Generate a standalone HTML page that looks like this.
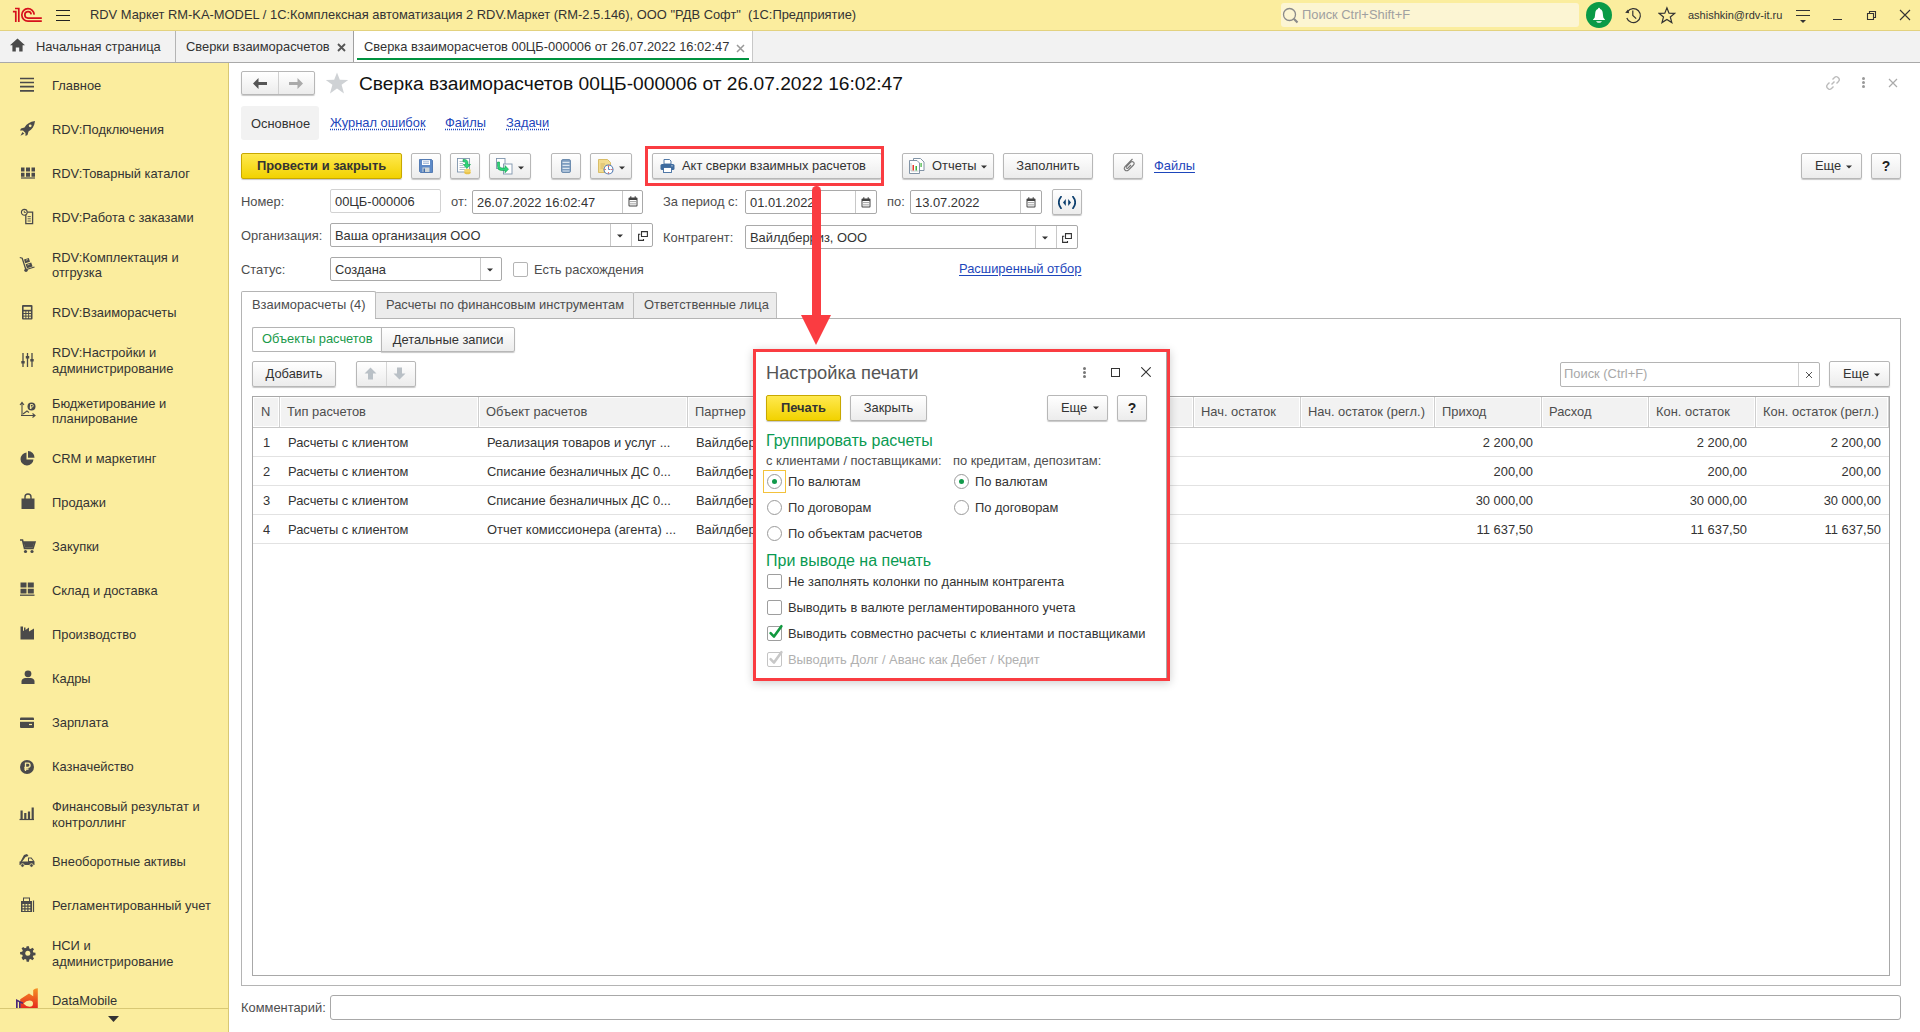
<!DOCTYPE html>
<html><head><meta charset="utf-8">
<style>
*{box-sizing:border-box;margin:0;padding:0}
html,body{width:1920px;height:1032px;overflow:hidden;background:#fff;font-family:"Liberation Sans",sans-serif;font-size:12.9px;color:#4d4d4d}
.a{position:absolute}
.t{position:absolute;white-space:nowrap;line-height:16px}
#top{left:0;top:0;width:1920px;height:31px;background:#fbed9e;border-bottom:1px solid #e3d27f}
#tabs{left:0;top:31px;width:1920px;height:32px;background:#f2f2f2;border-bottom:1px solid #a9a9a9}
#side{left:0;top:63px;width:229px;height:969px;background:#fbed9e;border-right:1px solid #d8c874}
.btn{position:absolute;height:26px;border:1px solid #b7b7b7;border-radius:2px;background:linear-gradient(#fff,#ececec);box-shadow:0 1px 1px rgba(0,0,0,.22);color:#333;white-space:nowrap;line-height:24px;text-align:center}
.ybtn{background:linear-gradient(#ffe94f,#f2d200);border-color:#c8a800;color:#333;font-weight:bold}
.fld{position:absolute;height:24px;border:1px solid #a9a9a9;border-radius:2px;background:#fff;color:#333;line-height:23px;padding-left:4px;white-space:nowrap}
.lnk{color:#1d46bb;text-decoration:underline;text-decoration-style:dotted;text-underline-offset:2px}
.lk2{color:#1d46bb;text-decoration:underline;text-underline-offset:2px}
</style></head><body>
<div id="top" class="a">
<svg class="a" style="left:0;top:0" width="48" height="30" viewBox="0 0 48 30"><g fill="none" stroke="#d6101c" stroke-width="1.7"><path d="M12.9 11.7 H15.8 V21.9"/><path d="M15 8.5 H18.8 V21.9"/><path d="M34.2 14.6 A6.2 6.2 0 1 0 28 21.1 H41.8"/><path d="M31.2 14.4 A3.2 3.2 0 1 0 28 18.1 H41.8"/></g></svg>
<div class="a" style="left:56px;top:10px;width:14px;height:1px;background:#222"></div>
<div class="a" style="left:56px;top:15px;width:14px;height:1px;background:#222"></div>
<div class="a" style="left:56px;top:20px;width:14px;height:1px;background:#222"></div>
<div class="t" style="left:90px;top:7px;color:#333">RDV Маркет RM-KA-MODEL / 1С:Комплексная автоматизация 2 RDV.Маркет (RM-2.5.146), ООО "РДВ Софт"&nbsp; (1С:Предприятие)</div>
<div class="a" style="left:1281px;top:3px;width:298px;height:24px;background:#fcf5d3;border-radius:3px"></div>
<svg class="a" style="left:1282px;top:7px" width="18" height="17" viewBox="0 0 18 17"><circle cx="7.5" cy="7.5" r="6" fill="none" stroke="#8a8a8a" stroke-width="1.3"/><path d="M11.8 11.8 L15.5 15.5" stroke="#8a8a8a" stroke-width="2.2"/></svg>
<div class="t" style="left:1302px;top:7px;color:#a0a0a0">Поиск Ctrl+Shift+F</div>
<div class="a" style="left:1586px;top:2px;width:26px;height:26px;border-radius:50%;background:#0a9a47"></div>
<svg class="a" style="left:1591px;top:7px" width="16" height="17" viewBox="0 0 16 17"><path d="M8 0.8 Q9 0.8 9 2 Q11.6 2.8 11.8 6.5 L12.3 10.5 L14.2 13 H1.8 L3.7 10.5 L4.2 6.5 Q4.4 2.8 7 2 Q7 0.8 8 0.8Z" fill="#fff"/><path d="M5 14.2 H11 Q10 15.8 8 15.8 Q6 15.8 5 14.2Z" fill="#fff"/></svg>
<svg class="a" style="left:1624px;top:6px" width="18" height="18" viewBox="0 0 18 18"><path d="M3.6 5.6 A7 7 0 1 1 2.8 12" fill="none" stroke="#333" stroke-width="1.2"/><path d="M1.2 6.8 L5.2 7.2 L4 3.6Z" fill="#333"/><path d="M8.8 4.6 V9.4 L12.2 12.6" fill="none" stroke="#333" stroke-width="1.2"/></svg>
<svg class="a" style="left:1658px;top:6px" width="18" height="18" viewBox="0 0 18 18"><path d="M8.9 1.8 L11 7.1 L16.6 7.4 L12.3 11 L13.8 16.6 L8.9 13.4 L4 16.6 L5.5 11 L1.2 7.4 L6.8 7.1Z" fill="none" stroke="#333" stroke-width="1.2" stroke-linejoin="miter"/></svg>
<div class="t" style="left:1688px;top:7px;color:#333;font-size:11px">ashishkin@rdv-it.ru</div>
<div class="a" style="left:1796px;top:10px;width:14px;height:1px;background:#333"></div>
<div class="a" style="left:1796px;top:15px;width:14px;height:1px;background:#333"></div>
<svg class="a" style="left:1800px;top:20px" width="6" height="3"><path d="M0 0 H6 L3 3Z" fill="#333"/></svg>
<div class="a" style="left:1833px;top:19px;width:9px;height:1px;background:#333"></div>
<svg class="a" style="left:1866px;top:10px" width="11" height="11" viewBox="0 0 11 11"><path d="M1.5 3.5 H7.5 V9.5 H1.5Z M3.5 3.5 V1.5 H9.5 V7.5 H7.5" fill="none" stroke="#333" stroke-width="1.1"/></svg>
<svg class="a" style="left:1899px;top:9px" width="12" height="12" viewBox="0 0 12 12"><path d="M1 1 L11 11 M11 1 L1 11" stroke="#333" stroke-width="1.1"/></svg>
</div>
<div id="tabs" class="a">
<svg class="a" style="left:9px;top:38px;top:7px" width="17" height="14" viewBox="0 0 17 14"><path d="M8.5 0.5 L16 7.2 H13.6 V13.5 H10.2 V9.5 H6.8 V13.5 H3.4 V7.2 H1Z" fill="#4a4a4a"/></svg>
<div class="t" style="left:36px;top:8px;color:#333">Начальная страница</div>
<div class="a" style="left:175px;top:0;width:1px;height:31px;background:#b4b4b4"></div>
<div class="t" style="left:186px;top:8px;color:#333">Сверки взаиморасчетов</div>
<svg class="a" style="left:337px;top:12px" width="9" height="9" viewBox="0 0 9 9"><path d="M1 1 L8 8 M8 1 L1 8" stroke="#555" stroke-width="1.8"/></svg>
<div class="a" style="left:353px;top:0;width:1px;height:31px;background:#a0a0a0"></div>
<div class="a" style="left:354px;top:0;width:398px;height:31px;background:#fff"></div>
<div class="a" style="left:357px;top:27px;width:392px;height:2px;background:#00923f"></div>
<div class="t" style="left:364px;top:8px;color:#333">Сверка взаиморасчетов 00ЦБ-000006 от 26.07.2022 16:02:47</div>
<svg class="a" style="left:736px;top:13px" width="9" height="9" viewBox="0 0 9 9"><path d="M1 1 L8 8 M8 1 L1 8" stroke="#999" stroke-width="1.5"/></svg>
<div class="a" style="left:752px;top:0;width:1px;height:31px;background:#c8c8c8"></div>
</div>
<div id="side" class="a">
<svg class="a" style="left:20px;top:15px;overflow:visible" width="16" height="16"><path d="M0 0.5H14M0 4.5H14M0 8.7H14M0 12.9H14" stroke="#4a4a4a" stroke-width="1.7"/></svg>
<div class="t" style="left:52px;top:15.0px;color:#333">Главное</div>
<svg class="a" style="left:19.5px;top:58px;overflow:visible" width="16" height="16"><path d="M15 0 C10 0.5 6.5 3 4.5 6.5 L1 7.5 L0 9.5 L3 9.5 L5.5 12 L5.5 15 L7.5 14 L8.5 10.5 C12 8.5 14.5 5 15 0Z" fill="#4a4a4a"/><circle cx="10.2" cy="4.8" r="1.4" fill="#fbed9e"/><path d="M2.5 11 L0.5 14.8 L4.3 12.8Z" fill="#4a4a4a"/></svg>
<div class="t" style="left:52px;top:59.0px;color:#333">RDV:Подключения</div>
<svg class="a" style="left:20.5px;top:104px;overflow:visible" width="16" height="16"><path d="M0 0.5h3.5v4h-3.5zM5 0.5h4v4h-4zM10.5 0.5h3.5v4h-3.5zM0 5.8h3.5v4h-3.5zM5 5.8h4v4h-4zM10.5 5.8h3.5v4h-3.5z" fill="#4a4a4a"/><path d="M0 11H14" stroke="#4a4a4a" stroke-width="1.2"/></svg>
<div class="t" style="left:52px;top:102.7px;color:#333">RDV:Товарный каталог</div>
<svg class="a" style="left:20.5px;top:145.5px;overflow:visible" width="16" height="16" viewBox="0 0 16 16"><path d="M4.8 3.2 H11.6 V14.6 H4.8Z" fill="none" stroke="#4a4a4a" stroke-width="1.3"/><path d="M6.6 7.6H9.8M6.6 9.8H9.8M6.6 12H9.8" stroke="#4a4a4a" stroke-width="0.9"/><circle cx="3.3" cy="3.3" r="2.9" fill="#fbed9e" stroke="#4a4a4a" stroke-width="1.1"/><path d="M3.3 1.8V3.5H4.8" stroke="#4a4a4a" stroke-width="0.9" fill="none"/></svg>
<div class="t" style="left:52px;top:146.7px;color:#333">RDV:Работа с заказами</div>
<svg class="a" style="left:19px;top:192px;overflow:visible" width="16" height="18" viewBox="0 0 16 18"><path d="M0.8 2.5 L3.2 3.2 L7 15" stroke="#4a4a4a" stroke-width="1.3" fill="none"/><circle cx="7" cy="15.3" r="1.7" fill="#4a4a4a"/><path d="M7.5 14.5 L15.5 12" stroke="#4a4a4a" stroke-width="1.3"/><path d="M5 4.5 L9.8 3 L11 6.8 L6.2 8.3Z M6.6 9.2 L12.2 7.4 L13.6 11.4 L8 13.2Z" fill="#4a4a4a"/><path d="M7 5.2 L8.8 4.6M8.4 10 L10.6 9.3" stroke="#fbed9e" stroke-width="0.7"/></svg>
<div class="t" style="left:52px;top:186.7px;color:#333">RDV:Комплектация и</div>
<div class="t" style="left:52px;top:202.1px;color:#333">отгрузка</div>
<svg class="a" style="left:21.5px;top:242px;overflow:visible" width="11" height="15" viewBox="0 0 11 15"><rect x="0" y="0" width="10.5" height="14.5" rx="1" fill="#4a4a4a"/><rect x="1.6" y="1.8" width="7.3" height="3" fill="#fbed9e"/><g fill="#fbed9e"><rect x="1.6" y="6.4" width="1.8" height="1.6"/><rect x="4.35" y="6.4" width="1.8" height="1.6"/><rect x="7.1" y="6.4" width="1.8" height="1.6"/><rect x="1.6" y="9" width="1.8" height="1.6"/><rect x="4.35" y="9" width="1.8" height="1.6"/><rect x="7.1" y="9" width="1.8" height="1.6"/><rect x="1.6" y="11.6" width="1.8" height="1.6"/><rect x="4.35" y="11.6" width="1.8" height="1.6"/><rect x="7.1" y="11.6" width="1.8" height="1.6"/></g></svg>
<div class="t" style="left:52px;top:241.7px;color:#333">RDV:Взаиморасчеты</div>
<svg class="a" style="left:20.5px;top:290px;overflow:visible" width="16" height="16"><path d="M2 0V14M6.5 0V14M11 0V14" stroke="#4a4a4a" stroke-width="1.3"/><path d="M0.3 8h3.4v2.5H0.3zM4.8 3h3.4v2.5H4.8zM9.3 6h3.4v2.5H9.3z" fill="#4a4a4a"/></svg>
<div class="t" style="left:52px;top:282.2px;color:#333">RDV:Настройки и</div>
<div class="t" style="left:52px;top:297.6px;color:#333">администрирование</div>
<svg class="a" style="left:19.5px;top:338px;overflow:visible" width="16" height="16"><path d="M2 15V2M0 4L2 1.5L4 4M1 14.5H15M12.5 12.5L15 14.5L12.5 16.5" stroke="#4a4a4a" stroke-width="1.1" fill="none"/><path d="M3 13 L7 10 L9 11.5" stroke="#4a4a4a" stroke-width="1.1" fill="none"/><circle cx="11.5" cy="5.5" r="4" fill="#4a4a4a"/><path d="M10.5 3.3V8M10.5 3.5H12A1.2 1.2 0 0 1 12 6H9.8M9.8 7H12" stroke="#fbed9e" stroke-width="0.9" fill="none"/></svg>
<div class="t" style="left:52px;top:332.5px;color:#333">Бюджетирование и</div>
<div class="t" style="left:52px;top:347.9px;color:#333">планирование</div>
<svg class="a" style="left:20px;top:388px;overflow:visible" width="16" height="16"><path d="M6.5 1.5 A6.5 6.5 0 1 0 13.5 8.5 H6.5Z" fill="#4a4a4a"/><path d="M8 0 A6.5 6.5 0 0 1 14.5 6.8 H8Z" fill="#4a4a4a"/></svg>
<div class="t" style="left:52px;top:387.5px;color:#333">CRM и маркетинг</div>
<svg class="a" style="left:20.5px;top:431px;overflow:visible" width="16" height="16"><path d="M0.5 4.5H13.5V15H0.5Z" fill="#4a4a4a"/><path d="M4 6V3A3 3 0 0 1 10 3V6" stroke="#4a4a4a" stroke-width="1.4" fill="none"/></svg>
<div class="t" style="left:52px;top:431.9px;color:#333">Продажи</div>
<svg class="a" style="left:19.5px;top:476px;overflow:visible" width="16" height="16"><path d="M0 1H2.5L4.5 9.5H13L15 3H3.2" stroke="#4a4a4a" stroke-width="1.6" fill="none"/><path d="M3.5 3H14.5L12.6 8.8H5Z" fill="#4a4a4a"/><circle cx="5.5" cy="12.5" r="1.6" fill="#4a4a4a"/><circle cx="12" cy="12.5" r="1.6" fill="#4a4a4a"/></svg>
<div class="t" style="left:52px;top:476.0px;color:#333">Закупки</div>
<svg class="a" style="left:19.5px;top:519px;overflow:visible" width="16" height="16"><path d="M0.5 0.5h6v5h-6zM7.8 0.5h6v5h-6zM0.5 6.7h6v4.8h-6zM7.8 6.7h6v4.8h-6z" fill="#4a4a4a"/><path d="M0 13.2H14.5" stroke="#4a4a4a" stroke-width="1.3"/></svg>
<div class="t" style="left:52px;top:519.5px;color:#333">Склад и доставка</div>
<svg class="a" style="left:20px;top:563px;overflow:visible" width="16" height="16"><path d="M0.5 0.5H3V5L4 4.5V1.5H5.5V4L9 1.5V5.5L14 2.5V13.5H0.5Z" fill="#4a4a4a"/></svg>
<div class="t" style="left:52px;top:563.7px;color:#333">Производство</div>
<svg class="a" style="left:20.5px;top:607px;overflow:visible" width="16" height="16"><circle cx="7" cy="3.8" r="3.4" fill="#4a4a4a"/><path d="M0.5 14V11.5Q0.5 8.5 4 8H10Q13.5 8.5 13.5 11.5V14Z" fill="#4a4a4a"/></svg>
<div class="t" style="left:52px;top:607.5px;color:#333">Кадры</div>
<svg class="a" style="left:20px;top:654px;overflow:visible" width="16" height="16"><path d="M0 1.5Q0 0.5 1 0.5H13Q14 0.5 14 1.5V10Q14 11 13 11H1Q0 11 0 10Z" fill="#4a4a4a"/><path d="M0 3H14V4.8H0Z" fill="#fbed9e"/><path d="M9 7.5H12" stroke="#fbed9e" stroke-width="1.2"/></svg>
<div class="t" style="left:52px;top:651.5px;color:#333">Зарплата</div>
<svg class="a" style="left:20px;top:697px;overflow:visible" width="16" height="16"><circle cx="7" cy="7" r="7" fill="#4a4a4a"/><path d="M5.5 11V3.2H8A2 2 0 0 1 8 7.3H4.3M4.3 9H8.5" stroke="#fbed9e" stroke-width="1.3" fill="none"/></svg>
<div class="t" style="left:52px;top:696.2px;color:#333">Казначейство</div>
<svg class="a" style="left:19px;top:743px;overflow:visible" width="16" height="16"><path d="M1.5 4.5h2.2V13H1.5zM5.2 7h2.2V13H5.2zM8.9 5.5h2.2V13H8.9zM12.6 1.5h2.2V13h-2.2z" fill="#4a4a4a"/><path d="M0.5 13.5H15" stroke="#4a4a4a" stroke-width="1.2"/></svg>
<div class="t" style="left:52px;top:736.1px;color:#333">Финансовый результат и</div>
<div class="t" style="left:52px;top:751.5px;color:#333">контроллинг</div>
<svg class="a" style="left:19px;top:790px;overflow:visible" width="16" height="16"><path d="M1 9.5L5 2L8 1L9.5 3L6.5 4L2.5 9.5Z" fill="#4a4a4a"/><path d="M0.5 8.5H9V4.5H12.5L15.5 8.5V12H0.5Z" fill="#4a4a4a"/><path d="M10 5.5H12L14 8H10Z" fill="#fbed9e"/><circle cx="3.5" cy="12.5" r="1.8" fill="#4a4a4a" stroke="#fbed9e" stroke-width="0.8"/><circle cx="12.5" cy="12.5" r="1.8" fill="#4a4a4a" stroke="#fbed9e" stroke-width="0.8"/></svg>
<div class="t" style="left:52px;top:790.7px;color:#333">Внеоборотные активы</div>
<svg class="a" style="left:20px;top:834px;overflow:visible" width="16" height="16"><path d="M3 0.5H10V4H12V15H1V4H3Z" fill="#4a4a4a"/><path d="M4 1.5H9V4H4Z" fill="#fbed9e"/><path d="M2.5 7h1.8v1.5H2.5zM5.5 7h1.8v1.5H5.5zM8.5 7h1.8v1.5H8.5zM2.5 9.8h1.8v1.5H2.5zM5.5 9.8h1.8v1.5H5.5zM8.5 9.8h1.8v1.5H8.5zM2.5 12.4h1.8v1.5H2.5zM5.5 12.4h1.8v1.5H5.5zM8.5 12.4h1.8v1.5H8.5z" fill="#fbed9e"/><path d="M13.5 3.5V15" stroke="#4a4a4a" stroke-width="1.2"/></svg>
<div class="t" style="left:52px;top:834.8px;color:#333">Регламентированный учет</div>
<svg class="a" style="left:20px;top:883px;overflow:visible" width="15" height="15" viewBox="-0.6 -0.3 15.6 15.6"><path d="M6.3 0h2.4l.4 2.2 1.4.6 1.8-1.3 1.7 1.7-1.3 1.8.6 1.4 2.2.4v2.4l-2.2.4-.6 1.4 1.3 1.8-1.7 1.7-1.8-1.3-1.4.6-.4 2.2H6.3l-.4-2.2-1.4-.6-1.8 1.3L1 12l1.3-1.8-.6-1.4L-.5 8.4V6l2.2-.4.6-1.4L1 2.4 2.7.7l1.8 1.3 1.4-.6z" fill="#4a4a4a"/><circle cx="7.5" cy="7.2" r="2.6" fill="#fbed9e"/></svg>
<div class="t" style="left:52px;top:875.3px;color:#333">НСИ и</div>
<div class="t" style="left:52px;top:890.7px;color:#333">администрирование</div>
<div class="a" style="left:0;top:925px;width:228px;height:20px;overflow:hidden"><svg class="a" style="left:0;top:0" width="48" height="20" viewBox="0 0 48 20"><defs><linearGradient id="dmg" x1="0" y1="0" x2="0" y2="1"><stop offset="0" stop-color="#f59024"/><stop offset="1" stop-color="#e62a1e"/></linearGradient></defs><path d="M20.2 11.2 L29 5.6 L33.2 8.2 V2 Q35 0.2 37.8 0.3 V20 H20.2Z" fill="url(#dmg)"/><path d="M23.5 15.6 Q26 12.4 29.5 12.4 Q33 12.4 33 15.6 Q33 18.8 29.5 18.8 Q26 18.8 23.5 15.6Z" fill="#fbed9e"/><path d="M16 11 L23 14.6 V16 L20.6 15 V20 H19 V14.2 L17.7 13.6 V20 H16Z" fill="#4b2a78"/></svg></div>
<div class="t" style="left:52px;top:929.9px;color:#333">DataMobile</div>
<div class="a" style="left:0;top:945px;width:228px;height:1px;background:#d8c874"></div>
<div class="a" style="left:0;top:946px;width:228px;height:23px;background:#fbed9e"></div>
<svg class="a" style="left:108px;top:953px" width="11" height="7"><path d="M0 0H11L5.5 6Z" fill="#333"/></svg>
</div>

<!-- MAIN -->
<div class="btn" style="left:241px;top:71px;width:74px;height:24px"></div>
<div class="a" style="left:278px;top:72px;width:1px;height:22px;background:#d0d0d0"></div>
<svg class="a" style="left:253px;top:78px" width="14" height="11" viewBox="0 0 14 11"><path d="M0 5.5 L5.5 0 V3.9 H14 V7.1 H5.5 V11Z" fill="#555"/></svg>
<svg class="a" style="left:289px;top:78px" width="14" height="11" viewBox="0 0 14 11"><path d="M14 5.5 L8.5 0 V3.9 H0 V7.1 H8.5 V11Z" fill="#aaa"/></svg>
<svg class="a" style="left:325px;top:72px" width="24" height="22" viewBox="0 0 24 22"><path d="M12 0.5 L14.8 7.8 L23.2 8 L16.6 12.8 L19 21.5 L12 16.4 L5 21.5 L7.4 12.8 L0.8 8 L9.2 7.8Z" fill="#cfd2d5"/></svg>
<div class="t" style="left:359px;top:73px;font-size:19.2px;line-height:22px;color:#111">Сверка взаиморасчетов 00ЦБ-000006 от 26.07.2022 16:02:47</div>
<svg class="a" style="left:1825px;top:75px" width="16" height="16" viewBox="0 0 16 16"><g fill="none" stroke="#bbb" stroke-width="1.4"><path d="M6.5 9.5 L9.5 6.5"/><path d="M7.5 4.5 L9.5 2.5 Q11 1 12.5 2 L14 3.5 Q15 5 13.5 6.5 L11.5 8.5"/><path d="M8.5 11.5 L6.5 13.5 Q5 15 3.5 14 L2 12.5 Q1 11 2.5 9.5 L4.5 7.5"/></g></svg>
<div class="a" style="left:1862px;top:77px;width:3px;height:3px;border-radius:50%;background:#999"></div>
<div class="a" style="left:1862px;top:81px;width:3px;height:3px;border-radius:50%;background:#999"></div>
<div class="a" style="left:1862px;top:85px;width:3px;height:3px;border-radius:50%;background:#999"></div>
<svg class="a" style="left:1888px;top:78px" width="10" height="10" viewBox="0 0 10 10"><path d="M1 1 L9 9 M9 1 L1 9" stroke="#aaa" stroke-width="1.2"/></svg>

<div class="a" style="left:241px;top:106px;width:78px;height:34px;background:#f2f2f2;border-radius:3px"></div>
<div class="t" style="left:251px;top:116px;color:#333">Основное</div>
<div class="t lnk" style="left:330px;top:115px">Журнал ошибок</div>
<div class="t lnk" style="left:445px;top:115px">Файлы</div>
<div class="t lnk" style="left:506px;top:115px">Задачи</div>

<div class="btn ybtn" style="left:241px;top:153px;width:161px">Провести и закрыть</div>
<div class="btn" style="left:411px;top:153px;width:30px"></div>
<div class="btn" style="left:450px;top:153px;width:30px"></div>
<div class="btn" style="left:489px;top:153px;width:42px"></div>
<div class="btn" style="left:551px;top:153px;width:30px"></div>
<div class="btn" style="left:590px;top:153px;width:42px"></div>
<div class="btn" style="left:652px;top:153px;width:230px;text-align:left;padding-left:29px">Акт сверки взаимных расчетов</div>
<div class="btn" style="left:902px;top:153px;width:92px;text-align:left;padding-left:29px">Отчеты</div>
<div class="btn" style="left:1003px;top:153px;width:90px">Заполнить</div>
<div class="btn" style="left:1113px;top:153px;width:30px"></div>
<div class="t lk2" style="left:1154px;top:158px">Файлы</div>
<div class="btn" style="left:1801px;top:153px;width:61px;text-align:left;padding-left:13px">Еще</div>
<div class="btn" style="left:1871px;top:153px;width:30px;font-weight:bold;color:#222;font-size:14px">?</div>

<div class="t" style="left:241px;top:194px">Номер:</div>
<div class="fld" style="left:330px;top:189px;width:111px;border-color:#d2d2d2">00ЦБ-000006</div>
<div class="t" style="left:451px;top:194px">от:</div>
<div class="fld" style="left:472px;top:190px;width:171px">26.07.2022 16:02:47</div>
<div class="a" style="left:622px;top:191px;width:1px;height:22px;background:#c8c8c8"></div>
<div class="t" style="left:663px;top:194px">За период с:</div>
<div class="fld" style="left:745px;top:190px;width:132px">01.01.2022</div>
<div class="a" style="left:855px;top:191px;width:1px;height:22px;background:#c8c8c8"></div>
<div class="t" style="left:887px;top:194px">по:</div>
<div class="fld" style="left:910px;top:190px;width:132px">13.07.2022</div>
<div class="a" style="left:1020px;top:191px;width:1px;height:22px;background:#c8c8c8"></div>
<div class="btn" style="left:1052px;top:189px;width:30px;height:26px"></div>

<div class="t" style="left:241px;top:228px">Организация:</div>
<div class="fld" style="left:330px;top:223px;width:323px">Ваша организация ООО</div>
<div class="a" style="left:610px;top:224px;width:1px;height:22px;background:#c8c8c8"></div>
<div class="a" style="left:631px;top:224px;width:1px;height:22px;background:#c8c8c8"></div>
<div class="t" style="left:663px;top:230px">Контрагент:</div>
<div class="fld" style="left:745px;top:225px;width:333px">Вайлдберриз, ООО</div>
<div class="a" style="left:1035px;top:226px;width:1px;height:22px;background:#c8c8c8"></div>
<div class="a" style="left:1056px;top:226px;width:1px;height:22px;background:#c8c8c8"></div>

<div class="t" style="left:241px;top:262px">Статус:</div>
<div class="fld" style="left:330px;top:257px;width:172px">Создана</div>
<div class="a" style="left:480px;top:258px;width:1px;height:22px;background:#c8c8c8"></div>
<div class="a" style="left:513px;top:262px;width:15px;height:15px;border:1px solid #b4b4b4;border-radius:2px;background:#fff"></div>
<div class="t" style="left:534px;top:262px">Есть расхождения</div>
<div class="t lk2" style="left:959px;top:261px">Расширенный отбор</div>

<div class="a" style="left:241px;top:318px;width:1660px;height:668px;border:1px solid #b4b4b4"></div>
<div class="a" style="left:241px;top:291px;width:135px;height:28px;border:1px solid #b4b4b4;border-bottom:none;border-radius:2px 2px 0 0;background:#fff"></div>
<div class="t" style="left:252px;top:297px">Взаиморасчеты (4)</div>
<div class="a" style="left:375px;top:292px;width:259px;height:26px;border:1px solid #bdbdbd;border-bottom:none;border-radius:2px 2px 0 0;background:#ececec"></div>
<div class="t" style="left:386px;top:297px">Расчеты по финансовым инструментам</div>
<div class="a" style="left:633px;top:292px;width:144px;height:26px;border:1px solid #bdbdbd;border-bottom:none;border-radius:2px 2px 0 0;background:#ececec"></div>
<div class="t" style="left:644px;top:297px">Ответственные лица</div>

<div class="a" style="left:252px;top:327px;width:130px;height:25px;border:1px solid #b4b4b4;border-right:none;border-radius:2px 0 0 2px;background:#fff"></div>
<div class="t" style="left:262px;top:331px;color:#1a9a4a">Объекты расчетов</div>
<div class="btn" style="left:381px;top:327px;width:134px;height:25px;border-radius:0 2px 2px 0;line-height:23px">Детальные записи</div>

<div class="btn" style="left:252px;top:361px;width:84px">Добавить</div>
<div class="btn" style="left:356px;top:361px;width:60px"></div>
<div class="a" style="left:386px;top:362px;width:1px;height:24px;background:#d6d6d6"></div>
<svg class="a" style="left:364px;top:367px" width="13" height="13" viewBox="0 0 13 13"><path d="M6.5 0.5 L12.5 6.5 H9 V12.5 H4 V6.5 H0.5Z" fill="#b9c0c6"/></svg>
<svg class="a" style="left:393px;top:367px" width="13" height="13" viewBox="0 0 13 13"><path d="M6.5 12.5 L12.5 6.5 H9 V0.5 H4 V6.5 H0.5Z" fill="#b9c0c6"/></svg>

<div class="a" style="left:1560px;top:362px;width:260px;height:25px;border:1px solid #b4b4b4;border-radius:2px;background:#fff"></div>
<div class="t" style="left:1564px;top:366px;color:#a8a8a8">Поиск (Ctrl+F)</div>
<div class="a" style="left:1798px;top:363px;width:1px;height:23px;background:#d0d0d0"></div>
<svg class="a" style="left:1805px;top:371px" width="8" height="8" viewBox="0 0 8 8"><path d="M1 1 L7 7 M7 1 L1 7" stroke="#555" stroke-width="1"/></svg>
<div class="btn" style="left:1829px;top:361px;width:61px;text-align:left;padding-left:13px">Еще</div>

<div class="a" style="left:252px;top:396px;width:1638px;height:580px;border:1px solid #a8a8a8;background:#fff"></div>
<div class="a" style="left:253px;top:397px;width:26px;height:30px;background:#f2f2f2;border:1px solid #fff"></div>
<div class="a" style="left:279px;top:397px;width:1px;height:30px;background:#cfcfcf"></div>
<div class="t" style="left:261px;top:404px">N</div>
<div class="a" style="left:280px;top:397px;width:198px;height:30px;background:#f2f2f2;border:1px solid #fff"></div>
<div class="a" style="left:478px;top:397px;width:1px;height:30px;background:#cfcfcf"></div>
<div class="t" style="left:287px;top:404px">Тип расчетов</div>
<div class="a" style="left:479px;top:397px;width:208px;height:30px;background:#f2f2f2;border:1px solid #fff"></div>
<div class="a" style="left:687px;top:397px;width:1px;height:30px;background:#cfcfcf"></div>
<div class="t" style="left:486px;top:404px">Объект расчетов</div>
<div class="a" style="left:688px;top:397px;width:191px;height:30px;background:#f2f2f2;border:1px solid #fff"></div>
<div class="a" style="left:879px;top:397px;width:1px;height:30px;background:#cfcfcf"></div>
<div class="t" style="left:695px;top:404px">Партнер</div>
<div class="a" style="left:880px;top:397px;width:119px;height:30px;background:#f2f2f2;border:1px solid #fff"></div>
<div class="a" style="left:999px;top:397px;width:1px;height:30px;background:#cfcfcf"></div>
<div class="a" style="left:1000px;top:397px;width:99px;height:30px;background:#f2f2f2;border:1px solid #fff"></div>
<div class="a" style="left:1099px;top:397px;width:1px;height:30px;background:#cfcfcf"></div>
<div class="a" style="left:1100px;top:397px;width:93px;height:30px;background:#f2f2f2;border:1px solid #fff"></div>
<div class="a" style="left:1193px;top:397px;width:1px;height:30px;background:#cfcfcf"></div>
<div class="a" style="left:1194px;top:397px;width:106px;height:30px;background:#f2f2f2;border:1px solid #fff"></div>
<div class="a" style="left:1300px;top:397px;width:1px;height:30px;background:#cfcfcf"></div>
<div class="t" style="left:1201px;top:404px">Нач. остаток</div>
<div class="a" style="left:1301px;top:397px;width:133px;height:30px;background:#f2f2f2;border:1px solid #fff"></div>
<div class="a" style="left:1434px;top:397px;width:1px;height:30px;background:#cfcfcf"></div>
<div class="t" style="left:1308px;top:404px">Нач. остаток (регл.)</div>
<div class="a" style="left:1435px;top:397px;width:106px;height:30px;background:#f2f2f2;border:1px solid #fff"></div>
<div class="a" style="left:1541px;top:397px;width:1px;height:30px;background:#cfcfcf"></div>
<div class="t" style="left:1442px;top:404px">Приход</div>
<div class="a" style="left:1542px;top:397px;width:106px;height:30px;background:#f2f2f2;border:1px solid #fff"></div>
<div class="a" style="left:1648px;top:397px;width:1px;height:30px;background:#cfcfcf"></div>
<div class="t" style="left:1549px;top:404px">Расход</div>
<div class="a" style="left:1649px;top:397px;width:106px;height:30px;background:#f2f2f2;border:1px solid #fff"></div>
<div class="a" style="left:1755px;top:397px;width:1px;height:30px;background:#cfcfcf"></div>
<div class="t" style="left:1656px;top:404px">Кон. остаток</div>
<div class="a" style="left:1756px;top:397px;width:132px;height:30px;background:#f2f2f2;border:1px solid #fff"></div>
<div class="a" style="left:1888px;top:397px;width:1px;height:30px;background:#cfcfcf"></div>
<div class="t" style="left:1763px;top:404px">Кон. остаток (регл.)</div>
<div class="a" style="left:253px;top:427px;width:1636px;height:1px;background:#c8c8c8"></div>
<div class="a" style="left:253px;top:456px;width:1636px;height:1px;background:#e2e2e2"></div>
<div class="t" style="left:263px;top:435px;color:#333">1</div>
<div class="t" style="left:288px;top:435px;color:#333">Расчеты с клиентом</div>
<div class="t" style="left:487px;top:435px;color:#333">Реализация товаров и услуг ...</div>
<div class="t" style="left:696px;top:435px;color:#333">Вайлдберриз, ООО</div>
<div class="t" style="right:387px;top:435px;color:#333">2 200,00</div>
<div class="t" style="right:173px;top:435px;color:#333">2 200,00</div>
<div class="t" style="right:39px;top:435px;color:#333">2 200,00</div>
<div class="a" style="left:253px;top:485px;width:1636px;height:1px;background:#e2e2e2"></div>
<div class="t" style="left:263px;top:464px;color:#333">2</div>
<div class="t" style="left:288px;top:464px;color:#333">Расчеты с клиентом</div>
<div class="t" style="left:487px;top:464px;color:#333">Списание безналичных ДС 0...</div>
<div class="t" style="left:696px;top:464px;color:#333">Вайлдберриз, ООО</div>
<div class="t" style="right:387px;top:464px;color:#333">200,00</div>
<div class="t" style="right:173px;top:464px;color:#333">200,00</div>
<div class="t" style="right:39px;top:464px;color:#333">200,00</div>
<div class="a" style="left:253px;top:514px;width:1636px;height:1px;background:#e2e2e2"></div>
<div class="t" style="left:263px;top:493px;color:#333">3</div>
<div class="t" style="left:288px;top:493px;color:#333">Расчеты с клиентом</div>
<div class="t" style="left:487px;top:493px;color:#333">Списание безналичных ДС 0...</div>
<div class="t" style="left:696px;top:493px;color:#333">Вайлдберриз, ООО</div>
<div class="t" style="right:387px;top:493px;color:#333">30 000,00</div>
<div class="t" style="right:173px;top:493px;color:#333">30 000,00</div>
<div class="t" style="right:39px;top:493px;color:#333">30 000,00</div>
<div class="a" style="left:253px;top:543px;width:1636px;height:1px;background:#e2e2e2"></div>
<div class="t" style="left:263px;top:522px;color:#333">4</div>
<div class="t" style="left:288px;top:522px;color:#333">Расчеты с клиентом</div>
<div class="t" style="left:487px;top:522px;color:#333">Отчет комиссионера (агента) ...</div>
<div class="t" style="left:696px;top:522px;color:#333">Вайлдберриз, ООО</div>
<div class="t" style="right:387px;top:522px;color:#333">11 637,50</div>
<div class="t" style="right:173px;top:522px;color:#333">11 637,50</div>
<div class="t" style="right:39px;top:522px;color:#333">11 637,50</div>

<div class="t" style="left:241px;top:1000px">Комментарий:</div>
<div class="a" style="left:330px;top:995px;width:1571px;height:25px;border:1px solid #a8a8a8;border-radius:3px;background:#fff"></div>


<!-- ICONS -->
<svg class="a" style="left:419px;top:159px" width="14" height="14" viewBox="0 0 14 14"><path d="M0.5 0.5H12.5L13.5 1.5V13.5H1.5L0.5 12.5Z" fill="#5d8ac8" stroke="#3f6aa8" stroke-width="0.8"/><rect x="3" y="1.2" width="8" height="4.8" fill="#fff"/><path d="M4 2.8H10M4 4.4H10" stroke="#7a9cc9" stroke-width="0.7"/><rect x="3.5" y="8.5" width="7" height="4.5" fill="#cfd6d8"/><rect x="4.5" y="9.5" width="1.5" height="3.5" fill="#3f6aa8"/></svg>
<svg class="a" style="left:457px;top:158px" width="16" height="17" viewBox="0 0 16 17"><rect x="0.5" y="0.5" width="12" height="13.5" fill="#fff" stroke="#7f95ad" stroke-width="0.9"/><path d="M2.5 3.5H6M2.5 5.5H6M2.5 7.5H6M2.5 9.5H8M2.5 11.5H8" stroke="#9fb0c2" stroke-width="0.8"/><ellipse cx="10.5" cy="14.5" rx="3.3" ry="1.8" fill="#e8c24a"/><ellipse cx="10.5" cy="12.5" rx="3.3" ry="1.8" fill="#f2d56a"/><path d="M6 1.5 Q11 1 11 5 V6.5 H13.5 L9.8 10.5 L6.2 6.5 H8.5 V5 Q8.5 3.5 6 3.8Z" fill="#2dd47a" stroke="#0f9a4a" stroke-width="0.6"/></svg>
<svg class="a" style="left:496px;top:158px" width="17" height="17" viewBox="0 0 17 17"><rect x="0.5" y="0.5" width="8.5" height="10" fill="#fff" stroke="#7f95ad" stroke-width="0.9"/><rect x="7.5" y="6" width="8.5" height="10" fill="#fff" stroke="#7f95ad" stroke-width="0.9"/><path d="M3.5 4 V8 Q3.5 10 6 10 H9 V7.5 L12.5 11.2 L9 14.8 V12.5 H5.5 Q1.5 12.5 1.5 8.5 V4Z" fill="#2dd47a" stroke="#0f9a4a" stroke-width="0.6"/></svg>
<svg class="a" style="left:518px;top:166px" width="6" height="4" viewBox="0 0 6 4"><path d="M0 0.5H6L3 3.5Z" fill="#333"/></svg>
<svg class="a" style="left:561px;top:159px" width="10" height="14" viewBox="0 0 10 14"><rect x="0.5" y="0.5" width="9" height="13" rx="1.5" fill="#7d9dc0" stroke="#5b7ea5" stroke-width="0.8"/><path d="M1.5 3.3H8.5M1.5 6.3H8.5M1.5 9.3H8.5M1.5 12H8.5" stroke="#dbe6f0" stroke-width="1.2"/></svg>
<svg class="a" style="left:598px;top:159px" width="16" height="16" viewBox="0 0 16 16"><path d="M0.5 0.5H9.5L12.5 3.5V13.5H0.5Z" fill="#f2dc8f" stroke="#d6b85e" stroke-width="0.9"/><path d="M2.5 5H7M2.5 7H6M2.5 9H5" stroke="#c9a855" stroke-width="0.7"/><circle cx="10.5" cy="10.5" r="4.5" fill="#fff" stroke="#4f78b0" stroke-width="1.1"/><g fill="#e02020"><circle cx="10.5" cy="7.2" r=".6"/><circle cx="10.5" cy="13.8" r=".6"/><circle cx="7.2" cy="10.5" r=".6"/><circle cx="13.8" cy="10.5" r=".6"/></g><path d="M10.5 10.5V8M10.5 10.5H12.5" stroke="#4f78b0" stroke-width="0.9"/></svg>
<svg class="a" style="left:619px;top:166px" width="6" height="4" viewBox="0 0 6 4"><path d="M0 0.5H6L3 3.5Z" fill="#333"/></svg>
<svg class="a" style="left:660px;top:159px" width="15" height="14" viewBox="0 0 15 14"><path d="M4 0.5H9.5L11 2V5H4Z" fill="#fff" stroke="#3e6b9e" stroke-width="0.9"/><rect x="0.5" y="5" width="14" height="6" rx="1.5" fill="#3e6b9e"/><rect x="3.5" y="8.5" width="8" height="5" fill="#fff" stroke="#3e6b9e" stroke-width="0.9"/><circle cx="12" cy="6.8" r=".6" fill="#fff"/></svg>
<svg class="a" style="left:909px;top:158px" width="16" height="16" viewBox="0 0 16 16"><path d="M4.5 0.5H11.5L15 4V12.5H4.5Z" fill="#fff" stroke="#74889c" stroke-width="0.9"/><path d="M0.5 2.5H8L10.5 5V15.5H0.5Z" fill="#fff" stroke="#74889c" stroke-width="0.9"/><path d="M2 5V13H9.5" stroke="#9aa" stroke-width="0.6" fill="none"/><rect x="3.5" y="7" width="1.5" height="5.5" fill="#e83a2a"/><rect x="6.5" y="8" width="1.5" height="4.5" fill="#3cb43c"/><rect x="11.5" y="5" width="1.2" height="4" fill="#3cb43c"/></svg>
<svg class="a" style="left:981px;top:165px" width="6" height="4" viewBox="0 0 6 4"><path d="M0 0.5H6L3 3.5Z" fill="#333"/></svg>
<svg class="a" style="left:1121px;top:158px" width="14" height="15" viewBox="0 0 14 15"><path d="M11.5 1 L4 8.5 Q2.5 10.5 4 12 Q5.5 13.5 7.5 12 L12.5 7 Q13.8 5.5 12.5 4.2 Q11.2 3 9.8 4.2 L5.5 8.5 Q4.8 9.5 5.5 10.2 Q6.2 10.8 7 10 L10 7" fill="none" stroke="#777" stroke-width="1.1"/></svg>
<svg class="a" style="left:1846px;top:165px" width="6" height="4" viewBox="0 0 6 4"><path d="M0 0.5H6L3 3.5Z" fill="#333"/></svg>
<svg class="a" style="left:1874px;top:373px" width="6" height="4" viewBox="0 0 6 4"><path d="M0 0.5H6L3 3.5Z" fill="#333"/></svg>
<svg class="a" style="left:628px;top:196px" width="10" height="11" viewBox="0 0 10 11"><rect x="0.5" y="1.5" width="9" height="9" rx="1" fill="#444"/><rect x="1.5" y="4" width="7" height="5.5" fill="#fff"/><path d="M2.8 0.3V2M7.2 0.3V2" stroke="#444" stroke-width="1.1"/><g fill="#444"><circle cx="3" cy="5.6" r=".6"/><circle cx="5" cy="5.6" r=".6"/><circle cx="7" cy="5.6" r=".6"/><circle cx="3" cy="7.8" r=".6"/><circle cx="5" cy="7.8" r=".6"/><circle cx="7" cy="7.8" r=".6"/></g></svg>
<svg class="a" style="left:861px;top:197px" width="10" height="11" viewBox="0 0 10 11"><rect x="0.5" y="1.5" width="9" height="9" rx="1" fill="#444"/><rect x="1.5" y="4" width="7" height="5.5" fill="#fff"/><path d="M2.8 0.3V2M7.2 0.3V2" stroke="#444" stroke-width="1.1"/><g fill="#444"><circle cx="3" cy="5.6" r=".6"/><circle cx="5" cy="5.6" r=".6"/><circle cx="7" cy="5.6" r=".6"/><circle cx="3" cy="7.8" r=".6"/><circle cx="5" cy="7.8" r=".6"/><circle cx="7" cy="7.8" r=".6"/></g></svg>
<svg class="a" style="left:1026px;top:197px" width="10" height="11" viewBox="0 0 10 11"><rect x="0.5" y="1.5" width="9" height="9" rx="1" fill="#444"/><rect x="1.5" y="4" width="7" height="5.5" fill="#fff"/><path d="M2.8 0.3V2M7.2 0.3V2" stroke="#444" stroke-width="1.1"/><g fill="#444"><circle cx="3" cy="5.6" r=".6"/><circle cx="5" cy="5.6" r=".6"/><circle cx="7" cy="5.6" r=".6"/><circle cx="3" cy="7.8" r=".6"/><circle cx="5" cy="7.8" r=".6"/><circle cx="7" cy="7.8" r=".6"/></g></svg>
<svg class="a" style="left:1058px;top:196px" width="18" height="13" viewBox="0 0 18 13"><path d="M3 0.8 Q0.8 3.5 0.8 6.5 Q0.8 9.5 3 12.2 M15 0.8 Q17.2 3.5 17.2 6.5 Q17.2 9.5 15 12.2" fill="none" stroke="#0d3f6e" stroke-width="1.8" stroke-linecap="round"/><path d="M7.8 3 L5 6.5 L7.8 10Z M10.2 3 L13 6.5 L10.2 10Z" fill="#0d3f6e"/></svg>
<svg class="a" style="left:617px;top:234px" width="6" height="4" viewBox="0 0 6 4"><path d="M0 0.5H6L3 3.5Z" fill="#333"/></svg>
<svg class="a" style="left:638px;top:231px" width="10" height="10" viewBox="0 0 10 10"><path d="M3.5 0.6H9.4V5.5H3.5Z" fill="none" stroke="#333" stroke-width="1.1"/><path d="M2.3 3.2H0.6V9.4H5.5V8" fill="none" stroke="#333" stroke-width="1.1"/></svg>
<svg class="a" style="left:1042px;top:236px" width="6" height="4" viewBox="0 0 6 4"><path d="M0 0.5H6L3 3.5Z" fill="#333"/></svg>
<svg class="a" style="left:1062px;top:233px" width="10" height="10" viewBox="0 0 10 10"><path d="M3.5 0.6H9.4V5.5H3.5Z" fill="none" stroke="#333" stroke-width="1.1"/><path d="M2.3 3.2H0.6V9.4H5.5V8" fill="none" stroke="#333" stroke-width="1.1"/></svg>
<svg class="a" style="left:487px;top:268px" width="6" height="4" viewBox="0 0 6 4"><path d="M0 0.5H6L3 3.5Z" fill="#333"/></svg>

<!-- DIALOG -->
<div class="a" style="left:753px;top:349px;width:417px;height:332px;box-shadow:0 2px 9px rgba(0,0,0,.2);background:#fff"></div>
<div class="a" style="left:756px;top:352px;width:411px;height:326px;border-right:1px solid #a8a8a8;background:#fff"></div>
<div class="t" style="left:766px;top:362px;font-size:18.3px;line-height:22px;color:#555">Настройка печати</div>
<div class="a" style="left:1083px;top:367px;width:3px;height:3px;border-radius:50%;background:#777"></div>
<div class="a" style="left:1083px;top:371px;width:3px;height:3px;border-radius:50%;background:#777"></div>
<div class="a" style="left:1083px;top:375px;width:3px;height:3px;border-radius:50%;background:#777"></div>
<div class="a" style="left:1111px;top:368px;width:9px;height:9px;border:1.3px solid #333"></div>
<svg class="a" style="left:1141px;top:367px" width="10" height="10" viewBox="0 0 10 10"><path d="M0.3 0.3 L9.7 9.7 M9.7 0.3 L0.3 9.7" stroke="#333" stroke-width="1.1"/></svg>
<div class="btn ybtn" style="left:766px;top:395px;width:75px">Печать</div>
<div class="btn" style="left:850px;top:395px;width:77px">Закрыть</div>
<div class="btn" style="left:1047px;top:395px;width:61px;text-align:left;padding-left:13px">Еще</div>
<svg class="a" style="left:1093px;top:406px" width="6" height="4" viewBox="0 0 6 4"><path d="M0 0.5H6L3 3.5Z" fill="#333"/></svg>
<div class="btn" style="left:1117px;top:395px;width:30px;font-weight:bold;color:#222;font-size:14px">?</div>
<div class="t" style="left:766px;top:431.5px;font-size:16px;line-height:18px;color:#0a9a52">Группировать расчеты</div>
<div class="t" style="left:766px;top:453px">с клиентами / поставщиками:</div>
<div class="t" style="left:953px;top:453px">по кредитам, депозитам:</div>
<div class="a" style="left:763px;top:470px;width:23px;height:23px;border:1px solid #f3c23c"></div>
<div class="a" style="left:767.0px;top:474.0px;width:15px;height:15px;border:1px solid #9a9a9a;border-radius:50%;background:#fff"></div><div class="a" style="left:772.0px;top:479.0px;width:5px;height:5px;border-radius:50%;background:#129a4b"></div>
<div class="t" style="left:788px;top:473.5px;color:#333">По валютам</div>
<div class="a" style="left:767.0px;top:500.0px;width:15px;height:15px;border:1px solid #9a9a9a;border-radius:50%;background:#fff"></div>
<div class="t" style="left:788px;top:499.5px;color:#333">По договорам</div>
<div class="a" style="left:767.0px;top:526.0px;width:15px;height:15px;border:1px solid #9a9a9a;border-radius:50%;background:#fff"></div>
<div class="t" style="left:788px;top:525.5px;color:#333">По объектам расчетов</div>
<div class="a" style="left:954.0px;top:474.0px;width:15px;height:15px;border:1px solid #9a9a9a;border-radius:50%;background:#fff"></div><div class="a" style="left:959.0px;top:479.0px;width:5px;height:5px;border-radius:50%;background:#129a4b"></div>
<div class="t" style="left:975px;top:473.5px;color:#333">По валютам</div>
<div class="a" style="left:954.0px;top:500.0px;width:15px;height:15px;border:1px solid #9a9a9a;border-radius:50%;background:#fff"></div>
<div class="t" style="left:975px;top:499.5px;color:#333">По договорам</div>
<div class="t" style="left:766px;top:551.5px;font-size:16px;line-height:18px;color:#0a9a52">При выводе на печать</div>
<div class="a" style="left:767px;top:574px;width:15px;height:15px;border:1px solid #9e9e9e;border-radius:2px;background:#fff"></div>
<div class="t" style="left:788px;top:573.5px;color:#333">Не заполнять колонки по данным контрагента</div>
<div class="a" style="left:767px;top:600px;width:15px;height:15px;border:1px solid #9e9e9e;border-radius:2px;background:#fff"></div>
<div class="t" style="left:788px;top:599.5px;color:#333">Выводить в валюте регламентированного учета</div>
<div class="a" style="left:767px;top:626px;width:15px;height:15px;border:1px solid #9e9e9e;border-radius:2px;background:#fff"></div><svg class="a" style="left:768px;top:623.5px;overflow:visible" width="16" height="16" viewBox="0 0 16 16"><path d="M2.6 9.2 L6 12.6 L13.4 2.2" fill="none" stroke="#11993f" stroke-width="2.6" stroke-linecap="round" stroke-linejoin="round"/></svg>
<div class="t" style="left:788px;top:625.5px;color:#333">Выводить совместно расчеты с клиентами и поставщиками</div>
<div class="a" style="left:767px;top:652px;width:15px;height:15px;border:1px solid #c4c4c4;border-radius:2px;background:#fff"></div><svg class="a" style="left:768px;top:649.5px;overflow:visible" width="16" height="16" viewBox="0 0 16 16"><path d="M2.6 9.2 L6 12.6 L13.4 2.2" fill="none" stroke="#c8c8c8" stroke-width="2.6" stroke-linecap="round" stroke-linejoin="round"/></svg>
<div class="t" style="left:788px;top:651.5px;color:#b0b0b0">Выводить Долг / Аванс как Дебет / Кредит</div>

<!-- RED ANNOTATIONS -->
<div class="a" style="left:753px;top:349px;width:417px;height:332px;border:3px solid #fa3c41"></div>
<div class="a" style="left:645px;top:146px;width:239px;height:40px;border:3px solid #fa3c41"></div>
<div class="a" style="left:811.5px;top:186px;width:9.5px;height:130px;background:#fa3c41;border-radius:5px 5px 0 0"></div>
<svg class="a" style="left:800px;top:314px" width="32" height="32" viewBox="0 0 32 32"><path d="M1 1 H31 L16 31Z" fill="#fa3c41"/></svg>
</body></html>
